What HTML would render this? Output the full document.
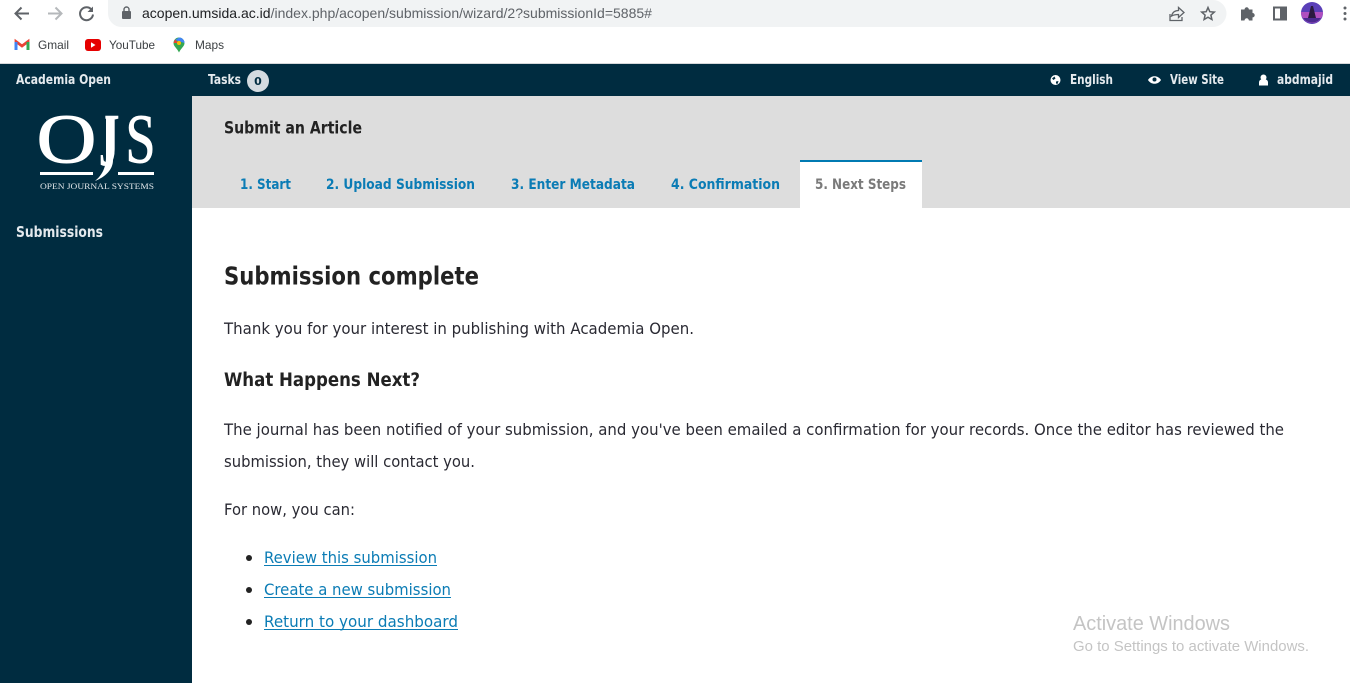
<!DOCTYPE html>
<html lang="en"><head><meta charset="utf-8"><title>Submit an Article</title>
<style>
html,body{margin:0;padding:0;width:1350px;height:683px;overflow:hidden;background:#fff}
svg{display:block}
text{font-family:"DejaVu Sans","Liberation Sans",sans-serif}
.ch{font-family:"Liberation Sans",sans-serif;font-size:12px;fill:#3c4043}
.top{font-size:13.500px;font-weight:700;fill:#e4eaee}
.tab{font-size:14.500px;font-weight:700;fill:#0b7cb5}
.p{font-size:16px;fill:#2a2a33}
.a{font-size:16px;fill:#0b7cb5}
.s{font-family:"Liberation Serif",serif;fill:#fff;stroke:#fff;stroke-width:.9px}
</style></head><body>
<svg width="1350" height="683" viewBox="0 0 1350 683" xmlns="http://www.w3.org/2000/svg">
<rect width="1350" height="683" fill="#fff"/>

<!-- browser toolbar -->
<path d="M108 0H1213a13.500 13.500 0 0 1 0 27H121.500A13.500 13.500 0 0 1 108 13.500Z" fill="#f1f3f4"/>
<path d="M29 13.500H16M21.500 7.500 15.500 13.500 21.500 19.500" fill="none" stroke="#5f6368" stroke-width="2"/>
<path d="M48 13.500H61M55.500 7.500 61.500 13.500 55.500 19.500" fill="none" stroke="#b5b8bb" stroke-width="2"/>
<path d="M91.500 9.500A6.500 6.500 0 1 0 93 14.500" fill="none" stroke="#5f6368" stroke-width="2"/>
<path d="M93 6.500V12H87.500Z" fill="#5f6368"/>
<rect x="122" y="11" width="9" height="8" rx="1" fill="#5f6368"/>
<path d="M124 11.500V9.500a2.500 2.500 0 0 1 5 0V11.500" fill="none" stroke="#5f6368" stroke-width="1.400"/>
<text x="142" y="18" font-size="14" textLength="510" lengthAdjust="spacingAndGlyphs" style="font-family:'Liberation Sans',sans-serif"><tspan fill="#202124">acopen.umsida.ac.id</tspan><tspan fill="#5f6368">/index.php/acopen/submission/wizard/2?submissionId=5885#</tspan></text>
<path d="M1170 14v6.500h12V17M1171.500 16c1-4 4-5.500 7-5.500V7.500l5.500 5-5.500 5v-3c-3 0-5 .5-7 1.500Z" fill="none" stroke="#5f6368" stroke-width="1.300"/>
<path d="M1208 7.500l1.800 4.200 4.500.4-3.400 3 1 4.400-3.900-2.300-3.900 2.300 1-4.400-3.400-3 4.500-.4Z" fill="none" stroke="#5f6368" stroke-width="1.500"/>
<path d="M1241 9.500h3.500a2.200 2.200 0 1 1 4.400 0H1252.500v3.500a2.200 2.200 0 1 1 0 4.400V20.500h-3.600a2.200 2.200 0 1 0-4.400 0H1241Z" fill="#5f6368"/>
<rect x="1274" y="7.500" width="12" height="12" fill="none" stroke="#5f6368" stroke-width="2"/>
<rect x="1280" y="7.500" width="6" height="12" fill="#5f6368"/>
<circle cx="1312" cy="13" r="11" fill="#5a3fb8"/>
<path d="M1301 12a11 11 0 0 0 22 0Z" fill="#b04fc0"/>
<path d="M1303 18h18a11 11 0 0 1-18 0Z" fill="#4a2a90"/>
<path d="M1308 18l3-12h2l3 12Z" fill="#2a1a40"/>
<circle cx="1345" cy="8" r="1.500" fill="#5f6368"/><circle cx="1345" cy="13.500" r="1.500" fill="#5f6368"/><circle cx="1345" cy="19" r="1.500" fill="#5f6368"/>

<!-- bookmarks -->
<path d="M16 50V41.500l6 4.500 6-4.500V50" fill="none" stroke="#ea4335" stroke-width="2.800"/>
<path d="M16 42v8" stroke="#4285f4" stroke-width="3"/><path d="M28 42v8" stroke="#34a853" stroke-width="3"/>
<text class="ch" x="38" y="49" textLength="31" lengthAdjust="spacingAndGlyphs">Gmail</text>
<rect x="85" y="39" width="16" height="12" rx="3" fill="#e60000"/><path d="M91 42.200v5.600l4.500-2.800Z" fill="#fff"/>
<text class="ch" x="109" y="49" textLength="46" lengthAdjust="spacingAndGlyphs">YouTube</text>
<path d="M179 37.500a5.500 5.500 0 0 0-5.500 5.500c0 3.500 3.500 5 5.500 9.500 2-4.500 5.500-6 5.500-9.500a5.500 5.500 0 0 0-5.500-5.500Z" fill="#34a853"/>
<path d="M179 37.500a5.500 5.500 0 0 1 5.500 5.500L175 40Z" fill="#4285f4"/>
<path d="M173.500 43 175 39.500 179 43Z" fill="#ea4335"/>
<circle cx="179" cy="43" r="2" fill="#fbbc04"/>
<text class="ch" x="195" y="49" textLength="29" lengthAdjust="spacingAndGlyphs">Maps</text>

<!-- frame -->
<rect x="0" y="63" width="1350" height="1" fill="#d6d8da"/>
<rect x="0" y="64" width="1350" height="32" fill="#002c40"/>
<rect x="0" y="96" width="192" height="587" fill="#002c40"/>
<rect x="192" y="96" width="1158" height="112" fill="#ddd"/>

<!-- top bar -->
<text class="top" x="16" y="84" textLength="95" lengthAdjust="spacingAndGlyphs">Academia Open</text>
<text class="top" x="208" y="84" textLength="33" lengthAdjust="spacingAndGlyphs">Tasks</text>
<circle cx="258" cy="81" r="11" fill="#d4dbe0"/>
<text x="258" y="85" font-size="11" font-weight="700" fill="#002c40" text-anchor="middle">0</text>
<circle cx="1055.500" cy="80" r="5" fill="#fff"/>
<path d="M1052 78.500l2.500-2 1 2-2 1.500ZM1056 81.500l2.500-.5-1 3-1.500-.5Z" fill="#002c40"/>
<text class="top" x="1070" y="84" textLength="43" lengthAdjust="spacingAndGlyphs">English</text>
<path d="M1148 80c3-5 10-5 13 0-3 5-10 5-13 0Z" fill="#fff"/><circle cx="1154.500" cy="79.500" r="2" fill="#002c40"/>
<text class="top" x="1170" y="84" textLength="54" lengthAdjust="spacingAndGlyphs">View Site</text>
<circle cx="1263.500" cy="77.500" r="3" fill="#fff"/><path d="M1259 85.500v-3c0-2 1.500-3.500 4.500-3.500s4.500 1.500 4.500 3.500v3Z" fill="#fff"/>
<text class="top" x="1277" y="84" textLength="56" lengthAdjust="spacingAndGlyphs">abdmajid</text>

<!-- OJS logo -->
<text class="s" x="36.500" y="162.500" font-size="70" textLength="60" lengthAdjust="spacingAndGlyphs">O</text>
<text class="s" transform="translate(100 165) scale(1 1.060)" font-size="70" textLength="19" lengthAdjust="spacingAndGlyphs">J</text>
<path d="M106 118h7v42c0 10-8 17-18 21 6-5 11-12 11-24Z" fill="#fff"/>
<text class="s" x="125.500" y="162.500" font-size="70" textLength="30" lengthAdjust="spacingAndGlyphs">S</text>
<rect x="40" y="172" width="53" height="3" fill="#fff"/>
<rect x="118" y="172" width="36" height="3" fill="#fff"/>
<text x="40" y="189" font-size="8.500" textLength="114" lengthAdjust="spacingAndGlyphs" style="font-family:'Liberation Serif',serif;fill:#dfe5e8">OPEN JOURNAL SYSTEMS</text>

<text x="16" y="237" font-size="15" font-weight="700" fill="#e4eaee" textLength="87" lengthAdjust="spacingAndGlyphs">Submissions</text>

<!-- header and tabs -->
<text x="224" y="133.500" font-size="16.500" font-weight="700" fill="#222" textLength="138" lengthAdjust="spacingAndGlyphs">Submit an Article</text>
<text class="tab" x="240" y="189" textLength="51" lengthAdjust="spacingAndGlyphs">1. Start</text>
<text class="tab" x="326" y="189" textLength="149" lengthAdjust="spacingAndGlyphs">2. Upload Submission</text>
<text class="tab" x="511" y="189" textLength="124" lengthAdjust="spacingAndGlyphs">3. Enter Metadata</text>
<text class="tab" x="671" y="189" textLength="109" lengthAdjust="spacingAndGlyphs">4. Confirmation</text>
<rect x="800" y="160" width="122" height="48" fill="#fff"/>
<rect x="800" y="160" width="122" height="2" fill="#007ab2"/>
<text x="815" y="189" font-size="14.500" font-weight="700" fill="#7a7a7a" textLength="91" lengthAdjust="spacingAndGlyphs">5. Next Steps</text>

<!-- content -->
<text x="224" y="284.500" font-size="24.500" font-weight="700" fill="#222" textLength="255" lengthAdjust="spacingAndGlyphs">Submission complete</text>
<text class="p" x="224" y="334" textLength="470" lengthAdjust="spacingAndGlyphs">Thank you for your interest in publishing with Academia Open.</text>
<text x="224" y="386" font-size="18.500" font-weight="700" fill="#222" textLength="196" lengthAdjust="spacingAndGlyphs">What Happens Next?</text>
<text class="p" x="224" y="435" textLength="1060" lengthAdjust="spacingAndGlyphs">The journal has been notified of your submission, and you've been emailed a confirmation for your records. Once the editor has reviewed the</text>
<text class="p" x="224" y="467" textLength="251" lengthAdjust="spacingAndGlyphs">submission, they will contact you.</text>
<text class="p" x="224" y="515" textLength="131" lengthAdjust="spacingAndGlyphs">For now, you can:</text>

<circle cx="249" cy="558" r="3" fill="#222"/>
<text class="a" x="264" y="563" textLength="173" lengthAdjust="spacingAndGlyphs">Review this submission</text>
<rect x="264" y="565" width="173" height="1" fill="#0b7cb5"/>
<circle cx="249" cy="590" r="3" fill="#222"/>
<text class="a" x="264" y="595" textLength="187" lengthAdjust="spacingAndGlyphs">Create a new submission</text>
<rect x="264" y="597" width="187" height="1" fill="#0b7cb5"/>
<circle cx="249" cy="622" r="3" fill="#222"/>
<text class="a" x="264" y="627" textLength="194" lengthAdjust="spacingAndGlyphs">Return to your dashboard</text>
<rect x="264" y="629" width="194" height="1" fill="#0b7cb5"/>

<!-- activation watermark -->
<text x="1073" y="630" font-size="20" fill="#c4c4c4" textLength="157" lengthAdjust="spacingAndGlyphs" style="font-family:'Liberation Sans',sans-serif">Activate Windows</text>
<text x="1073" y="651" font-size="15" fill="#c4c4c4" textLength="236" lengthAdjust="spacingAndGlyphs" style="font-family:'Liberation Sans',sans-serif">Go to Settings to activate Windows.</text>
</svg>
</body></html>
